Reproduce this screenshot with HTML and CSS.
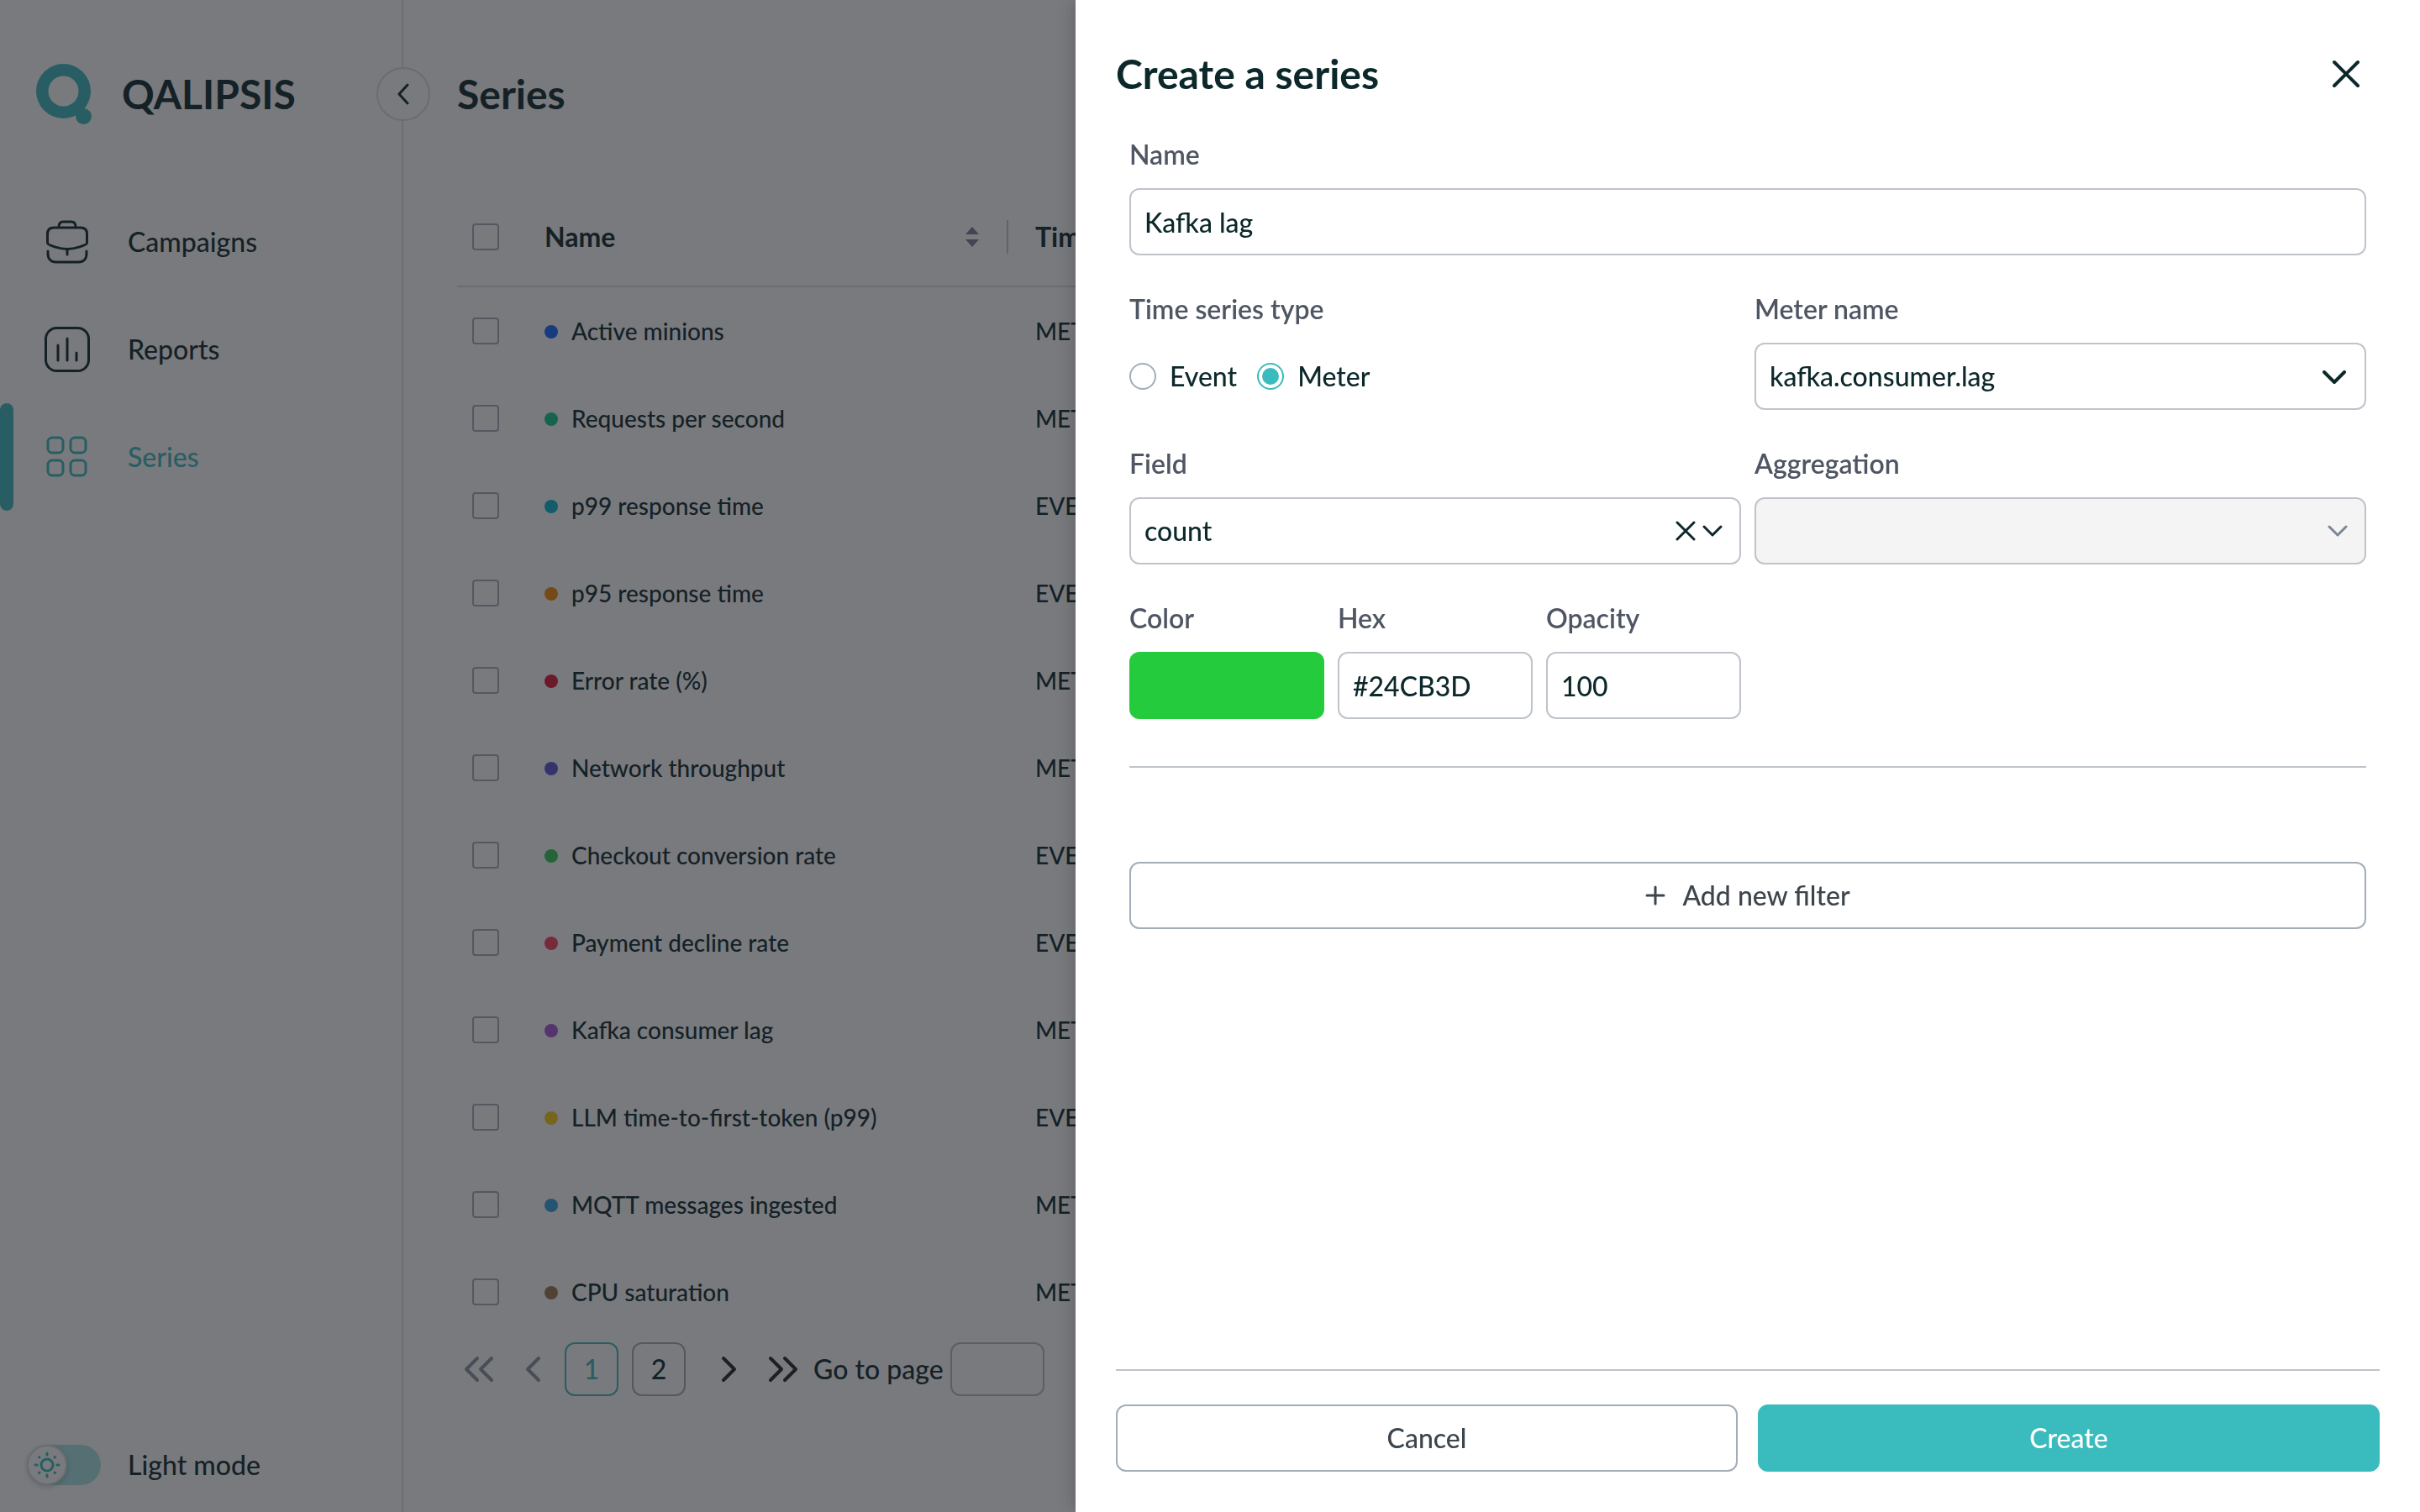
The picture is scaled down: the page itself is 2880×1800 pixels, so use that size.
FILE: index.html
```html
<!DOCTYPE html>
<html lang="en">
<head>
    <meta charset="UTF-8">
    <meta name="viewport" content="width=device-width, initial-scale=1.0">
    <title>QALIPSIS - Series</title>
    <link rel="stylesheet" href="styles.css">
</head>
<body>
    <div class="layout">
        <aside class="sidebar">
            <a class="logo" href="#">
                <svg class="logo-mark" width="66" height="72" viewBox="0 0 66 72">
                    <path fill-rule="evenodd" d="M32.500 0a32.500 32.500 0 1 1 0 65a32.500 32.500 0 1 1 0-65zM32.500 14.500a18 18 0 1 0 0 36a18 18 0 1 0 0-36z"/>
                    <circle cx="56.500" cy="62.500" r="9.500"/>
                </svg>
                <span class="logo-text">QALIPSIS</span>
            </a>
            <nav class="menu">
                <a class="menu-item" href="#">
                    <svg class="menu-icon" viewBox="0 3 56 56">
                        <path d="M18 13.500C18 9 20 7 23 7h10c3 0 5 2 5 6.500"/>
                        <path d="M12 14h32c5 0 7.500 3 7.500 7.500V32c0 3-15 7.500-23.500 7.500S4.500 35 4.500 32V21.500C4.500 17 7 14 12 14z"/>
                        <path d="M28 40v6M5 42v3c0 6 3.500 10 9.500 10h27c6 0 9.500-4 9.500-10v-3"/>
                    </svg>
                    Campaigns
                </a>
                <a class="menu-item" href="#">
                    <svg class="menu-icon" viewBox="0 0 56 56">
                        <rect x="2.500" y="2.500" width="51" height="51" rx="13"/>
                        <path d="M17 23v18M28 15v26M39 32v9"/>
                    </svg>
                    Reports
                </a>
                <a class="menu-item active" href="#">
                    <svg class="menu-icon" viewBox="0 0 56 56">
                        <rect x="5" y="5" width="18" height="18" rx="5"/>
                        <rect x="32" y="5" width="18" height="18" rx="5"/>
                        <rect x="5" y="32" width="18" height="18" rx="5"/>
                        <rect x="32" y="32" width="18" height="18" rx="5"/>
                    </svg>
                    Series
                </a>
            </nav>
            <label class="mode">
                <input class="mode-input" type="checkbox">
                <span class="switch">
                    <span class="knob">
                        <svg width="32" height="32" viewBox="0 0 32 32">
                            <circle cx="16" cy="16" r="7"/>
                            <path d="M16 2v2M16 28v2M2 16h2M28 16h2M6.500 6.500l.5.500M25 25l.5.500M6.500 25.500l.5-.5M25 7l.5-.5"/>
                        </svg>
                    </span>
                </span>
                Light mode
            </label>
            <button class="collapse" type="button" aria-label="Collapse menu">
                <svg width="16" height="26" viewBox="0 0 16 26"><path d="M13 2L3 13l10 11"/></svg>
            </button>
        </aside>

        <main class="content">
            <h1>Series</h1>
            <table class="series">
                <thead>
                    <tr>
                        <th class="check"><input type="checkbox" aria-label="Select all"></th>
                        <th class="name">
                            <div class="th-inner">
                                Name
                                <svg width="18" height="26" viewBox="0 0 18 26"><path d="M9 1l8 9H1zM9 25l8-9H1z"/></svg>
                            </div>
                        </th>
                        <th>Time series type</th>
                    </tr>
                </thead>
                <tbody>
                    <tr><td class="check"><input type="checkbox" aria-label="Active minions"></td><td><span class="dot blue"></span>Active minions</td><td>METER</td></tr>
                    <tr><td class="check"><input type="checkbox" aria-label="Requests per second"></td><td><span class="dot green"></span>Requests per second</td><td>METER</td></tr>
                    <tr><td class="check"><input type="checkbox" aria-label="p99 response time"></td><td><span class="dot cyan"></span>p99 response time</td><td>EVENT</td></tr>
                    <tr><td class="check"><input type="checkbox" aria-label="p95 response time"></td><td><span class="dot orange"></span>p95 response time</td><td>EVENT</td></tr>
                    <tr><td class="check"><input type="checkbox" aria-label="Error rate"></td><td><span class="dot red"></span>Error rate (%)</td><td>METER</td></tr>
                    <tr><td class="check"><input type="checkbox" aria-label="Network throughput"></td><td><span class="dot indigo"></span>Network throughput</td><td>METER</td></tr>
                    <tr><td class="check"><input type="checkbox" aria-label="Checkout conversion rate"></td><td><span class="dot lime"></span>Checkout conversion rate</td><td>EVENT</td></tr>
                    <tr><td class="check"><input type="checkbox" aria-label="Payment decline rate"></td><td><span class="dot rose"></span>Payment decline rate</td><td>EVENT</td></tr>
                    <tr><td class="check"><input type="checkbox" aria-label="Kafka consumer lag"></td><td><span class="dot purple"></span>Kafka consumer lag</td><td>METER</td></tr>
                    <tr><td class="check"><input type="checkbox" aria-label="LLM time-to-first-token"></td><td><span class="dot yellow"></span>LLM time-to-first-token (p99)</td><td>EVENT</td></tr>
                    <tr><td class="check"><input type="checkbox" aria-label="MQTT messages ingested"></td><td><span class="dot sky"></span>MQTT messages ingested</td><td>METER</td></tr>
                    <tr><td class="check"><input type="checkbox" aria-label="CPU saturation"></td><td><span class="dot brown"></span>CPU saturation</td><td>METER</td></tr>
                </tbody>
            </table>
            <div class="pagination">
                <button class="page-arrow" type="button" disabled aria-label="First page">
                    <svg width="36" height="32" viewBox="0 0 36 32"><path d="M16 3L3 16l13 13M33 3L20 16l13 13"/></svg>
                </button>
                <button class="page-arrow" type="button" disabled aria-label="Previous page">
                    <svg width="20" height="32" viewBox="0 0 20 32"><path d="M17 3L4 16l13 13"/></svg>
                </button>
                <div class="pages">
                    <button class="page current" type="button">1</button>
                    <button class="page" type="button">2</button>
                </div>
                <button class="page-arrow" type="button" aria-label="Next page">
                    <svg width="20" height="32" viewBox="0 0 20 32"><path d="M3 3l13 13L3 29"/></svg>
                </button>
                <button class="page-arrow" type="button" aria-label="Last page">
                    <svg width="36" height="32" viewBox="0 0 36 32"><path d="M3 3l13 13L3 29M20 3l13 13-13 13"/></svg>
                </button>
                <label class="go-to">Go to page <input type="text"></label>
            </div>
        </main>
    </div>

    <div class="mask"></div>

    <section class="drawer" role="dialog" aria-labelledby="drawer-title">
        <header class="drawer-header">
            <h2 id="drawer-title">Create a series</h2>
            <button class="close" type="button" aria-label="Close">
                <svg width="36" height="36" viewBox="0 0 36 36"><path d="M4 4l28 28M32 4L4 32"/></svg>
            </button>
        </header>
        <form class="drawer-body">
            <div class="form-grid">
                <div class="field wide">
                    <label class="label" for="name">Name</label>
                    <input class="control" id="name" type="text" value="Kafka lag">
                </div>
                <div class="field" role="radiogroup" aria-labelledby="type-label">
                    <span class="label" id="type-label">Time series type</span>
                    <div class="radios">
                        <label><input type="radio" name="type">Event</label>
                        <label><input type="radio" name="type" checked>Meter</label>
                    </div>
                </div>
                <div class="field">
                    <label class="label" for="meter">Meter name</label>
                    <div class="select">
                        <select class="control" id="meter"><option>kafka.consumer.lag</option></select>
                        <svg class="chevron large" width="28" height="18" viewBox="0 0 28 18"><path d="M2 2l12 12L26 2"/></svg>
                    </div>
                </div>
                <div class="field">
                    <label class="label" for="field">Field</label>
                    <div class="select">
                        <select class="control" id="field"><option>count</option></select>
                        <button class="clear" type="button" aria-label="Clear">
                            <svg width="24" height="24" viewBox="0 0 24 24"><path d="M2 2l20 20M22 2L2 22"/></svg>
                        </button>
                        <svg class="chevron" width="24" height="14" viewBox="0 0 24 14"><path d="M2 2l10 10L22 2"/></svg>
                    </div>
                </div>
                <div class="field">
                    <label class="label" for="aggregation">Aggregation</label>
                    <div class="select">
                        <select class="control" id="aggregation" disabled><option></option></select>
                        <svg class="chevron off" width="24" height="14" viewBox="0 0 24 14"><path d="M2 2l10 10L22 2"/></svg>
                    </div>
                </div>
                <div class="color-grid">
                    <div class="field">
                        <label class="label" for="color">Color</label>
                        <input class="swatch" id="color" type="color" value="#24cb3d">
                    </div>
                    <div class="field">
                        <label class="label" for="hex">Hex</label>
                        <input class="control" id="hex" type="text" value="#24CB3D">
                    </div>
                    <div class="field">
                        <label class="label" for="opacity">Opacity</label>
                        <input class="control" id="opacity" type="text" value="100">
                    </div>
                </div>
            </div>
            <hr>
            <button class="btn" type="button">
                <svg width="24" height="24" viewBox="0 0 24 24"><path d="M12 2v20M2 12h20"/></svg>
                Add new filter
            </button>
        </form>
        <footer class="drawer-footer">
            <button class="btn" type="button">Cancel</button>
            <button class="btn primary" type="button">Create</button>
        </footer>
    </section>
</body>
</html>
```
FILE: styles.css
```css
* {
    box-sizing: border-box;
}

body {
    margin: 0;
    background-color: #fff;
    color: #0c282a;
    font-family: Lato, "Open Sans", sans-serif;
    font-size: 32px;
    font-weight: 500;
    line-height: 40px;
    overflow: hidden;
}

button, input, select {
    margin: 0;
    font: inherit;
    color: inherit;
}

button {
    display: flex;
    align-items: center;
    justify-content: center;
    padding: 0;
    border: none;
    background: none;
    cursor: pointer;
}

a {
    color: inherit;
    text-decoration: none;
}

svg {
    flex-shrink: 0;
    fill: none;
    stroke: currentColor;
    stroke-width: 3;
    stroke-linecap: round;
    stroke-linejoin: round;
}

h1, h2 {
    margin: 0;
    font-size: 48px;
    line-height: 64px;
    font-weight: 700;
}

.layout {
    display: flex;
    min-height: 100vh;
}

/* sidebar */

.sidebar {
    position: relative;
    display: flex;
    flex-direction: column;
    width: 480px;
    border-right: 2px solid #dcdde1;
}

.logo {
    display: flex;
    align-items: center;
    gap: 36px;
    height: 224px;
    padding: 0 0 0 43px;
}

.logo-mark {
    fill: #3abbbd;
    stroke: none;
}

.logo-text {
    font-size: 48px;
    font-weight: 700;
}

.menu-item {
    display: flex;
    align-items: center;
    gap: 44px;
    height: 128px;
    padding-left: 52px;
}

.menu-icon {
    width: 56px;
    height: 56px;
}

.menu-item.active {
    color: #3abbbd;
    position: relative;
}

.menu-item.active::before {
    content: "";
    position: absolute;
    left: 0;
    top: 0;
    width: 16px;
    height: 100%;
    border-radius: 8px;
    background-color: #3abbbd;
}

.mode {
    display: flex;
    align-items: center;
    gap: 32px;
    margin-top: auto;
    padding: 0 32px 32px;
}

.mode-input {
    position: absolute;
    opacity: 0;
}

.switch {
    width: 88px;
    height: 48px;
    border-radius: 24px;
    background-color: #a8e4e5;
}

.knob {
    display: flex;
    align-items: center;
    justify-content: center;
    width: 48px;
    height: 48px;
    border: 2px solid #dcdde1;
    border-radius: 24px;
    background-color: #fff;
    box-shadow: 0 2px 6px rgba(0, 0, 0, 0.2);
    color: #3abbbd;
}

.collapse {
    position: absolute;
    top: 80px;
    right: -34px;
    width: 64px;
    height: 64px;
    border: 2px solid #dcdde1;
    border-radius: 32px;
    background-color: #fff;
}

/* series list */

.content {
    flex: 1;
    padding: 80px 64px 0;
}

.series {
    width: 100%;
    margin-top: 80px;
    border-collapse: separate;
    border-spacing: 0;
    table-layout: fixed;
    font-size: 28px;
}

th, td {
    height: 104px;
    padding: 0 32px;
    text-align: left;
}

th {
    height: 118px;
    border-bottom: 2px solid #dcdde1;
    font-size: 32px;
    font-weight: 700;
}

.check {
    width: 72px;
    padding: 0 18px;
}

.check input {
    display: block;
    appearance: none;
    width: 32px;
    height: 32px;
    border: 2px solid #a3acb8;
    border-radius: 4px;
}

.name {
    position: relative;
    width: 584px;
    padding-right: 34px;
}

.name::after {
    content: "";
    position: absolute;
    top: 38px;
    right: 0;
    width: 2px;
    height: 40px;
    background-color: #c4c8ce;
}

.th-inner {
    display: flex;
    align-items: center;
    justify-content: space-between;
}

.th-inner svg {
    fill: #767e8e;
    stroke: none;
}

.dot {
    display: inline-block;
    width: 16px;
    height: 16px;
    margin-right: 16px;
    border-radius: 8px;
    vertical-align: 2px;
}

.blue { background-color: #0f66ff; }
.green { background-color: #10c98f; }
.cyan { background-color: #06b6d4; }
.orange { background-color: #f58a07; }
.red { background-color: #e01432; }
.indigo { background-color: #5856d6; }
.lime { background-color: #34c759; }
.rose { background-color: #f43f5e; }
.purple { background-color: #a855d8; }
.yellow { background-color: #facc15; }
.sky { background-color: #32a4e0; }
.brown { background-color: #a07850; }

.pagination {
    display: flex;
    align-items: center;
    margin-left: -6px;
    padding-top: 8px;
}

.pages {
    display: flex;
    gap: 16px;
    margin: 0 20px 0 6px;
}

.page, .page-arrow {
    width: 64px;
    height: 64px;
}

.page-arrow {
    color: #222226;
}

.page-arrow svg {
    stroke-width: 4;
}

.page-arrow:disabled {
    color: #8891a0;
}

.page {
    border: 2px solid #a3acb8;
    border-radius: 12px;
}

.page.current {
    border-color: #3abbbd;
    color: #3abbbd;
}

.go-to {
    display: flex;
    align-items: center;
    gap: 8px;
    margin-left: 4px;
}

.go-to input {
    width: 112px;
    height: 64px;
    border: 2px solid #b8bcc8;
    border-radius: 12px;
    background: none;
}

/* drawer */

.mask {
    position: fixed;
    inset: 0;
    background-color: rgba(27, 29, 36, 0.59);
}

.drawer {
    position: fixed;
    top: 0;
    right: 0;
    bottom: 0;
    display: flex;
    flex-direction: column;
    width: 1600px;
    max-width: 100%;
    padding: 56px 48px 48px;
    background-color: #fff;
    box-shadow: -4px 0 20px rgba(0, 0, 0, 0.16);
}

.drawer-header {
    display: flex;
    align-items: center;
    justify-content: space-between;
    padding-right: 22px;
}

.close svg {
    stroke-width: 4;
}

.drawer-body {
    flex: 1;
    padding: 44px 16px 0;
}

.form-grid {
    display: grid;
    grid-template-columns: 1fr 1fr;
    gap: 44px 16px;
}

.color-grid {
    display: grid;
    grid-template-columns: 1fr 1fr 1fr;
    gap: 16px;
}

.wide {
    grid-column: 1 / -1;
}

.label {
    display: block;
    margin-bottom: 20px;
    color: #4f5663;
    font-weight: 600;
}

.control {
    display: block;
    appearance: none;
    width: 100%;
    height: 80px;
    padding: 0 16px;
    border: 2px solid #bfc4cb;
    border-radius: 12px;
    background-color: #fff;
}

.control:disabled {
    background-color: #f4f4f4;
    opacity: 1;
}

.swatch {
    display: block;
    appearance: none;
    width: 100%;
    height: 80px;
    padding: 0;
    border: none;
    border-radius: 12px;
    overflow: hidden;
    background: none;
}

.swatch::-webkit-color-swatch-wrapper {
    padding: 0;
}

.swatch::-webkit-color-swatch {
    border: none;
}

.radios {
    display: flex;
    align-items: center;
    gap: 24px;
    height: 80px;
}

.radios label {
    display: flex;
    align-items: center;
    gap: 16px;
}

.radios input {
    appearance: none;
    width: 32px;
    height: 32px;
    border: 2px solid #a3acb8;
    border-radius: 16px;
}

.radios input:checked {
    padding: 4px;
    border-color: #3abbbd;
    background: #3abbbd content-box;
}

.select {
    position: relative;
}

.chevron {
    position: absolute;
    top: 33px;
    right: 22px;
    pointer-events: none;
}

.chevron.large {
    right: 24px;
    stroke-width: 4;
}

.chevron.off {
    color: #7d8696;
}

.clear {
    position: absolute;
    top: 28px;
    right: 54px;
}

hr {
    margin: 56px 0 112px;
    border: none;
    border-top: 2px solid #bfc4cb;
}

.btn {
    gap: 20px;
    width: 100%;
    height: 80px;
    border: 2px solid #a3acb8;
    border-radius: 12px;
    color: #3c444c;
}

.btn.primary {
    border-color: #3abbbd;
    background-color: #3abbbd;
    color: #fff;
}

.drawer-footer {
    display: flex;
    gap: 24px;
    padding-top: 40px;
    border-top: 2px solid #bfc4cb;
}
```
